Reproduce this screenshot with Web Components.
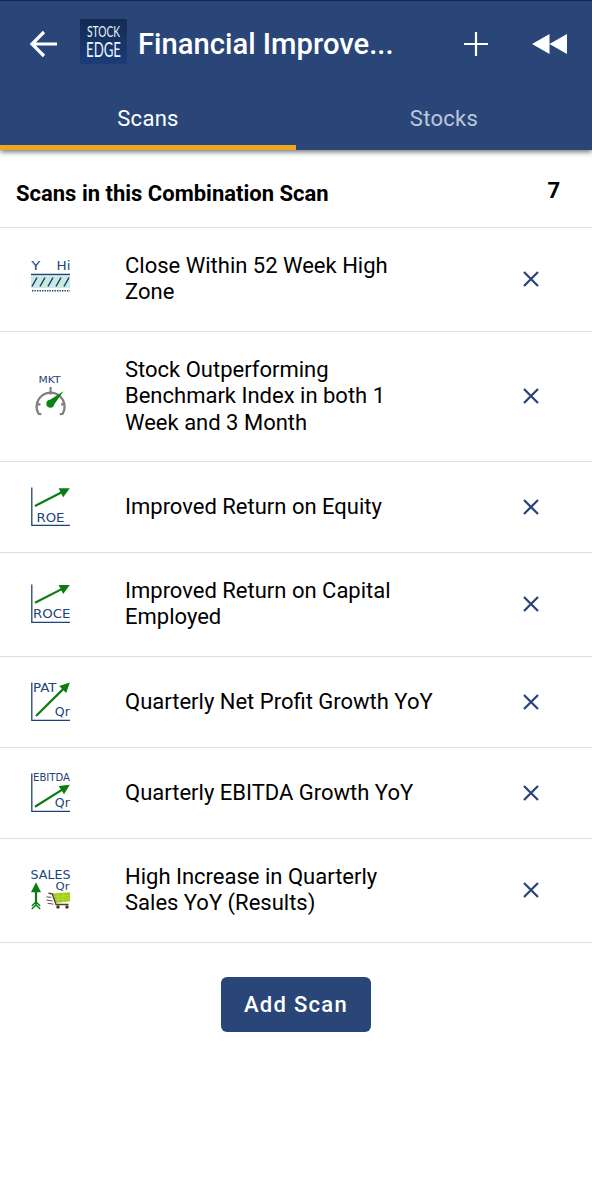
<!DOCTYPE html>
<html lang="en"><head><meta charset="utf-8"><title>Scans</title>
<style>html,body{margin:0;background:#fff}body{font-family:Roboto,sans-serif;color:#000}</style></head>
<body><scan-page></scan-page>
<script>
const define=(name,html)=>{
  const t=document.createElement('template');t.innerHTML=html;
  customElements.define(name,class extends HTMLElement{
    constructor(){super();this.attachShadow({mode:'open'}).append(t.content.cloneNode(true));}
    connectedCallback(){if(this.hasAttribute('kind'))this.shadowRoot.querySelector('svg').innerHTML=icons[this.getAttribute('kind')];}
  });
};
const axes='<path d="M1.8.5V38.3H40" fill="none" stroke="#1d4479" stroke-width="1.3"/>';
const arrow=(x1,y1,x2,y2)=>{
  const a=Math.atan2(y2-y1,x2-x1)*180/Math.PI,l=Math.hypot(x2-x1,y2-y1);
  return `<g transform="translate(${x2} ${y2}) rotate(${a})" fill="#0b7d10"><path d="M${-l}-1.1H-8V1.1H${-l}z"/><path d="M0 0L-10-5V5z"/></g>`;
};
const txt=(x,y,w,s,t)=>`<text x="${x}" y="${y}" textLength="${w}" lengthAdjust="spacingAndGlyphs" font-size="${s}" fill="#1d4479" font-family="DejaVu Sans,sans-serif">${t}</text>`;
const icons={
 high:txt(1.2,10.7,9,12,'Y')+txt(26.6,10.7,14,12,'Hi')+'<path d="M1 17H40V29H1z" fill="#cdeadd"/><path d="M1 15.5H40" stroke="#1d4479" stroke-width="1.6"/><path d="M2 27.5L7 18.5M10 27.5L15 18.5M18 27.5L23 18.5M26 27.5L31 18.5M34 27.5L39 18.5" stroke="#0d3f80" stroke-width="1.5"/><path d="M2 31.8H40" stroke="#1d4479" stroke-width="1.4" stroke-dasharray="1.4 1.1"/>',
 mkt:txt(8.5,7,22,9,'MKT')+'<path d="M11.3 38.2L8.7 38A14 14 0 1 1 32.5 38L29.8 38.2M20.6 11V18.5M6.5 28.3H10.5M31 28.3H35" fill="none" stroke="#7f8180" stroke-width="2.2"/><path d="M33.5 15.2L24.3 28.3A4 4 0 1 1 20 23.8z" fill="#0b8412"/>',
 roe:axes+arrow(5,19,39.8,1.2)+txt(6.5,34.8,28,12,'ROE'),
 roce:axes+arrow(5,18.8,39.8,1)+txt(3,34,37.5,12,'ROCE'),
 pat:axes+arrow(6,34,39.8,.5)+txt(3,10.2,23.5,12,'PAT')+txt(24.8,33.8,15,12,'Qr'),
 ebitda:axes+arrow(5,33.8,39.8,11.8)+txt(3,8.3,37,9.6,'EBITDA')+txt(24.8,34,15,12,'Qr'),
 sales:txt(.5,9.3,40,12,'SALES')+txt(25.5,19.8,14,10.5,'Qr')+arrow(6,34.5,6,12.3)+'<path d="M1.8 36L6 32L10.2 36M1.8 39L6 35L10.2 39" fill="none" stroke="#0b7d10" stroke-width="1.5"/><path d="M22.5 23.5L40 22.3V31.2L26 33z" fill="#9fcf14"/><path d="M24 26.5L40 25.5M25 29.5L40 28.6M28 23V32.6M33 22.8V32" stroke="#c5e65c" stroke-width=".5"/><path d="M18.5 23.2L22.3 23.8L26 34.5H38.5" fill="none" stroke="#4c4032" stroke-width="1.4"/><circle cx="28" cy="37" r="1.8" fill="#4c3a28"/><circle cx="37" cy="37" r="1.8" fill="#4c3a28"/><path d="M16.5 26.8L21.5 27.4M16.5 30L22.5 31M17.5 33.2L23.5 34.2" stroke="#555" stroke-width="1"/>'
};
define('scan-icon','<style>:host{display:block;width:41px;height:40px}svg{display:block}</style><svg width="41" height="40" viewBox="0 0 41 40"></svg>');
define('app-logo',`<style>:host{display:block;width:47px;height:45px;background:linear-gradient(#142a52,#1b3c78)}svg{display:block}</style>
<svg width="47" height="45" fill="#e8f4ff" font-family="Lato,sans-serif"><text x="7" y="18" font-size="16" textLength="33" lengthAdjust="spacingAndGlyphs">STOCK</text><text x="6" y="38" font-size="20.5" textLength="35" lengthAdjust="spacingAndGlyphs">EDGE</text></svg>`);
define('app-bar',`<style>
:host{display:block;height:150px;box-sizing:border-box;background:#2a4679;border-top:1px solid #14244c;color:#fff;box-shadow:0 2px 5px rgba(0,0,0,.55)}
.bar{display:flex;align-items:center;height:86px;padding:0 24px 0 29px}
.back{margin-right:22px}app-logo{margin:-6px 11px 0 0}
h1{margin:0;flex:1;font-size:29.2px;font-weight:500;white-space:nowrap;line-height:36px}
.plus{margin-right:44px}svg{display:block;flex:none}
nav{display:grid;grid-template-columns:1fr 1fr;height:63px}</style>
<div class="bar"><svg class="back" width="29" height="28" fill="none" stroke="#fff" stroke-width="3.2"><path d="M15 2L3 14L15 26M3 14H28"/></svg><app-logo></app-logo><h1>Financial Improve...</h1>
<svg class="plus" width="24" height="24" stroke="#fff" stroke-width="2.2"><path d="M0 12H24M12 0V24"/></svg><svg width="36" height="22" fill="#fff"><path d="M0 11L17.5 1V21zM17.5 11L35 1V21z"/></svg></div>
<nav><app-tab class="on">Scans</app-tab><app-tab>Stocks</app-tab></nav>`);
define('app-tab',`<style>:host{display:flex;align-items:center;justify-content:center;font-size:22px;letter-spacing:.3px;color:#bcc7da;border-bottom:5px solid transparent;box-sizing:border-box;padding-top:4px}:host(.on){color:#fff;border-bottom-color:#eba721}</style><slot></slot>`);
define('list-heading',`<style>:host{display:flex;justify-content:space-between;height:78px;box-sizing:border-box;padding:29px 32px 0 16px;border-bottom:1.5px solid #dedede;font-size:22px;line-height:30px;font-weight:700}.n{margin-top:-3px}</style><slot></slot><span class="n"><slot name="count"></slot></span>`);
define('scan-row',`<style>:host{display:grid;grid-template-columns:95px 330px 1fr;align-items:center;box-sizing:border-box;padding:25px 0 25px 30px;border-bottom:1.5px solid #dedede;min-height:89.8px;font-size:22px;line-height:26.4px}
div{white-space:nowrap}.x{justify-self:start;margin-left:68px}</style><slot name="icon"></slot><div><slot></slot></div><svg class="x" width="16" height="16" stroke="#2a4679" stroke-width="2.3"><path d="M1 1L15 15M15 1L1 15"/></svg>`);
define('add-button',`<style>:host{display:flex;justify-content:center;margin-top:34px}button{width:150px;height:55px;border:0;border-radius:6px;background:#2a4679;color:#fff;font:500 22px Roboto,sans-serif;letter-spacing:1.3px;padding:0}</style><button><slot></slot></button>`);
const rows=[['high','Close Within 52 Week High<br>Zone'],['mkt','Stock Outperforming<br>Benchmark Index in both 1<br>Week and 3 Month'],['roe','Improved Return on Equity'],['roce','Improved Return on Capital<br>Employed'],['pat','Quarterly Net Profit Growth YoY'],['ebitda','Quarterly EBITDA Growth YoY'],['sales','High Increase in Quarterly<br>Sales YoY (Results)']];
define('scan-page',`<style>:host{display:block;height:1200px;background:#fff;overflow:hidden}app-bar{position:relative}</style><app-bar></app-bar><list-heading>Scans in this Combination Scan<span slot="count">7</span></list-heading>${rows.map(([k,t])=>`<scan-row><scan-icon slot="icon" kind="${k}"></scan-icon>${t}</scan-row>`).join('')}<add-button>Add Scan</add-button>`);
</script></body></html>
